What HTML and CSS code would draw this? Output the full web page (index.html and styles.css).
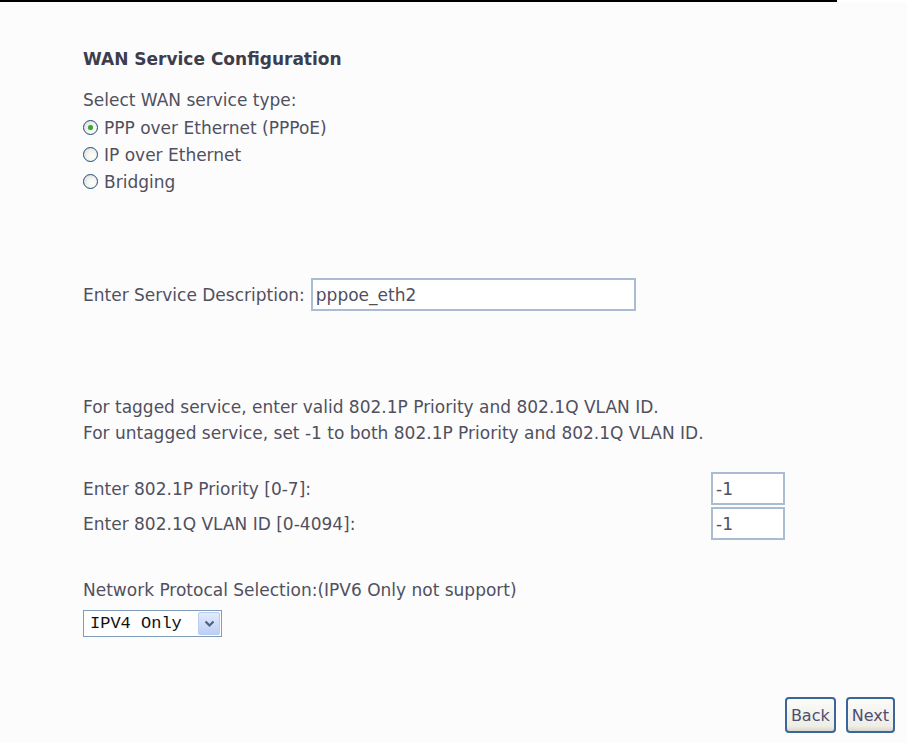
FILE: index.html
```html
<!DOCTYPE html>
<html>
<head>
<meta charset="utf-8">
<link rel="stylesheet" href="styles.css">
</head>
<body>
<div class="topline"></div>
<div class="page">
  <h1 class="title">WAN Service Configuration</h1>
  <p class="label">Select WAN service type:</p>
  <ul class="radios">
    <li><span class="radio checked"></span>PPP over Ethernet (PPPoE)</li>
    <li><span class="radio"></span>IP over Ethernet</li>
    <li><span class="radio"></span>Bridging</li>
  </ul>
  <div class="desc-row">
    <span>Enter Service Description:</span>
    <span class="field desc">pppoe_eth2</span>
  </div>
  <p class="note">For tagged service, enter valid 802.1P Priority and 802.1Q VLAN ID.<br>For untagged service, set -1 to both 802.1P Priority and 802.1Q VLAN ID.</p>
  <div class="vlan">
    <span class="vlabel">Enter 802.1P Priority [0-7]:</span>
    <span class="field small">-1</span>
    <span class="vlabel">Enter 802.1Q VLAN ID [0-4094]:</span>
    <span class="field small">-1</span>
  </div>
  <p class="proto">Network Protocal Selection:(IPV6 Only not support)</p>
  <div class="select">
    <span class="seltext">IPV4 Only</span>
    <span class="arrow"><svg width="11" height="8" viewBox="0 0 11 8"><path d="M1.5 1.5 L5.5 5.5 L9.5 1.5" fill="none" stroke="#4d6185" stroke-width="2.2"/></svg></span>
  </div>
  <div class="buttons">
    <button class="btn">Back</button>
    <button class="btn">Next</button>
  </div>
</div>
</body>
</html>
```

FILE: styles.css
```css
html, body {
  margin: 0;
  padding: 0;
  background: #ffffff;
}
body {
  font-family: "DejaVu Sans", Verdana, sans-serif;
  font-size: 17px;
  color: #50505f;
  width: 907px;
  height: 743px;
  overflow: hidden;
}
.topline {
  width: 837px;
  height: 2px;
  background: #000;
}
.page {
  background: #fcfcfc;
  padding: 0 12px 0 83px;
  height: 741px;
  box-sizing: border-box;
}
.title {
  margin: 0;
  padding-top: 44px;
  font-size: 17px;
  line-height: 26px;
  font-weight: bold;
  color: #3d3d4e;
}
.label {
  margin: 15px 0 0;
  line-height: 26px;
}
.radios {
  list-style: none;
  margin: 1px 0 0;
  padding: 0;
}
.radios li {
  display: flex;
  align-items: center;
  height: 27px;
}
.radio {
  width: 15px;
  height: 15px;
  box-sizing: border-box;
  border: 1.5px solid #1e4c7a;
  border-radius: 50%;
  background: radial-gradient(circle at 62% 62%, #ffffff 0%, #f3f3ee 45%, #d4d4cb 100%);
  margin-right: 6px;
  display: flex;
  align-items: center;
  justify-content: center;
}
.radio.checked::after {
  content: "";
  width: 5px;
  height: 5px;
  border-radius: 50%;
  background: #3aa83f;
  box-shadow: 0 0 1px #6fd070;
}
.desc-row {
  margin-top: 83px;
  display: flex;
  align-items: center;
  gap: 6px;
  height: 33px;
}
.field {
  box-sizing: border-box;
  height: 33px;
  border: 2px solid #a9bcd4;
  background: #fff;
  display: flex;
  align-items: center;
  padding-left: 3px;
  color: #4f4f60;
}
.field.desc {
  width: 325px;
}
.note {
  margin: 83px 0 0;
  line-height: 26px;
}
.vlan {
  margin-top: 26px;
  display: grid;
  grid-template-columns: 628px 74px;
  row-gap: 2px;
  align-items: center;
}
.proto {
  margin: 37px 0 0;
  line-height: 26px;
}
.select {
  margin-top: 7px;
  width: 139px;
  height: 27px;
  box-sizing: border-box;
  border: 1px solid #7f9db9;
  background: #fff;
  display: flex;
  align-items: center;
  justify-content: space-between;
  padding: 1px;
}
.seltext {
  font-family: "Liberation Mono", "Courier New", monospace;
  font-size: 17px;
  color: #111;
  padding-left: 5px;
}
.arrow {
  width: 22px;
  height: 23px;
  box-sizing: border-box;
  border: 1px solid #b9cdf2;
  border-radius: 2px;
  background: linear-gradient(#e2ebfd, #bccff5);
  display: flex;
  align-items: center;
  justify-content: center;
}
.buttons {
  margin-top: 60px;
  display: flex;
  justify-content: flex-end;
  gap: 10px;
}
.btn {
  font-family: "DejaVu Sans", Verdana, sans-serif;
  font-size: 16px;
  color: #4e4e72;
  height: 36px;
  padding: 0 4px;
  border: 2px solid #3a6797;
  border-radius: 4px;
  background: linear-gradient(#fbfbf8, #eeede6 85%, #d9d7cc);
}
```
